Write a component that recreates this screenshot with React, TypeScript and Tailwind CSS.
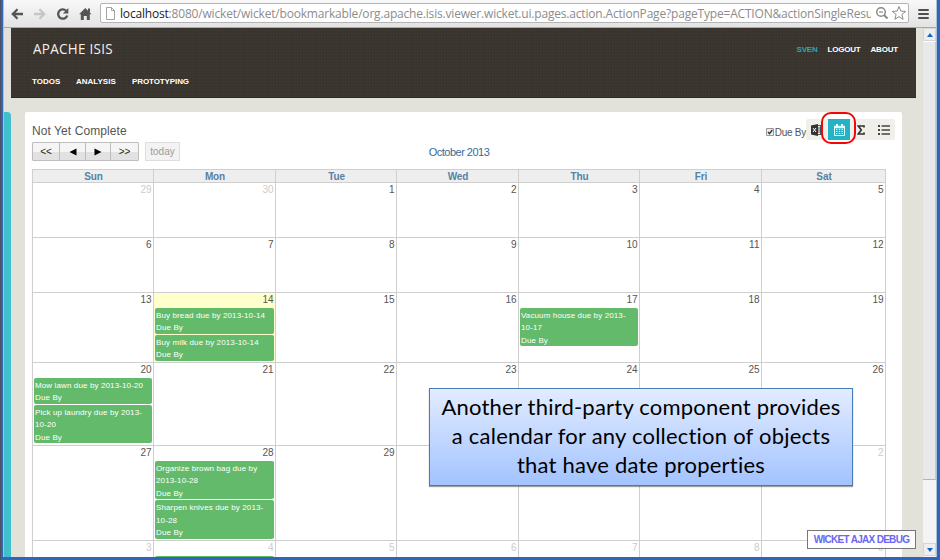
import React from "react";

type Entry = { title: string[] };
type Day = { n: number; muted?: boolean; today?: boolean; entries?: Entry[] };

const weekdays = ["Sun", "Mon", "Tue", "Wed", "Thu", "Fri", "Sat"];

const weeks: { height: string; days: Day[] }[] = [
  {
    height: "h-[55px]",
    days: [{ n: 29, muted: true }, { n: 30, muted: true }, { n: 1 }, { n: 2 }, { n: 3 }, { n: 4 }, { n: 5 }],
  },
  { height: "h-[55px]", days: [{ n: 6 }, { n: 7 }, { n: 8 }, { n: 9 }, { n: 10 }, { n: 11 }, { n: 12 }] },
  {
    height: "h-[70px]",
    days: [
      { n: 13 },
      {
        n: 14,
        today: true,
        entries: [{ title: ["Buy bread due by 2013-10-14"] }, { title: ["Buy milk due by 2013-10-14"] }],
      },
      { n: 15 },
      { n: 16 },
      { n: 17, entries: [{ title: ["Vacuum house due by 2013-", "10-17"] }] },
      { n: 18 },
      { n: 19 },
    ],
  },
  {
    height: "h-[83px]",
    days: [
      {
        n: 20,
        entries: [{ title: ["Mow lawn due by 2013-10-20"] }, { title: ["Pick up laundry due by 2013-", "10-20"] }],
      },
      { n: 21 },
      { n: 22 },
      { n: 23 },
      { n: 24 },
      { n: 25 },
      { n: 26 },
    ],
  },
  {
    height: "h-[95px]",
    days: [
      { n: 27 },
      {
        n: 28,
        entries: [
          { title: ["Organize brown bag due by", "2013-10-28"] },
          { title: ["Sharpen knives due by 2013-", "10-28"] },
        ],
      },
      { n: 29 },
      { n: 30 },
      { n: 31 },
      { n: 1, muted: true },
      { n: 2, muted: true },
    ],
  },
  {
    height: "h-[55px]",
    days: [
      { n: 3, muted: true },
      { n: 4, muted: true, entries: [{ title: [] }] },
      { n: 5, muted: true },
      { n: 6, muted: true },
      { n: 7, muted: true },
      { n: 8, muted: true },
      { n: 9, muted: true },
    ],
  },
];

const columns = "grid grid-cols-[121px_122px_121px_122px_121px_122px_124px]";

function Toolbar() {
  return (
    <div className="flex h-[28px] shrink-0 items-center border-b border-[#a9a9a9] bg-gradient-to-b from-[#f8f8f8] to-[#e3e3e3] pl-[6px]">
      <svg className="h-[14px] w-[90px] shrink-0" viewBox="0 0 90 14" fill="none">
        <path d="M13 7H2.500M7.500 2.300L2.800 7l4.700 4.700" stroke="#555" strokeWidth="2.300" />
        <path d="M24 7h10M29.500 2.300L34.200 7l-4.700 4.700" stroke="#c6c6c6" strokeWidth="2.300" />
        <path d="M56 3.500A4.700 4.700 0 1 0 57.300 8.500" stroke="#555" strokeWidth="2.300" />
        <path d="M58.300 1v5.500h-5.500z" fill="#555" />
        <path d="M75.300 1l6.200 6.200h-1.700V13h-3v-4h-3v4h-3V7.200h-1.700z" fill="#555" />
        <path d="M78 1.500h2v4h-2z" fill="#555" />
      </svg>
      <div className="mt-[-1px] flex h-[20px] w-[809px] shrink-0 items-center rounded-[2px] border border-[#b4b4b4] bg-white pl-[5px]">
        <svg className="mr-[5px] h-[13px] w-[9px] shrink-0" viewBox="0 0 9 13" fill="#fff" stroke="#a3a3a3">
          <path d="M.500.500h5l3 3v9h-8zM5.500.500v3h3" />
        </svg>
        <div className="mt-px w-[751px] overflow-hidden whitespace-nowrap font-['Open_Sans',sans-serif] text-[12px] leading-[18px] tracking-[-0.185px] text-[#8c8c8c]">
          <span className="text-[#222]">localhost</span>
          :8080/wicket/wicket/bookmarkable/org.apache.isis.viewer.wicket.ui.pages.action.ActionPage?pageType=ACTION&amp;actionSingleResu
        </div>
        <svg className="ml-[4px] h-[14px] w-[32px] shrink-0" viewBox="0 0 32 14" fill="none" stroke="#8a8a8a">
          <circle cx="6" cy="6" r="4.300" strokeWidth="1.500" />
          <path d="M4 6h4" strokeWidth="1.200" />
          <path d="M9 9l3.500 3.500" strokeWidth="2" />
          <path d="M24 .5l1.800 4.600 4.900.3-3.800 3.100 1.200 4.800L24 10.600l-4.100 2.700 1.200-4.800-3.800-3.100 4.900-.3z" />
        </svg>
      </div>
      <div className="ml-[9px] flex flex-col gap-[2px]">
        <div className="h-[2px] w-[11px] rounded-full bg-[#505050]" />
        <div className="h-[2px] w-[11px] rounded-full bg-[#505050]" />
        <div className="h-[2px] w-[11px] rounded-full bg-[#505050]" />
      </div>
    </div>
  );
}

function Header() {
  return (
    <header className="flex h-[70px] w-[905px] shrink-0 justify-between border-b border-[#2c2822] bg-[#3a352e] bg-[repeating-linear-gradient(90deg,#0000000c_0_1px,transparent_1px_3px),repeating-linear-gradient(0deg,#ffffff04_0_1px,transparent_1px_3px)] pl-[21px] pr-[18px] text-[8px] font-bold text-white">
      <div className="flex flex-col">
        <div className="ml-px mt-[11px] h-[20px] origin-left scale-x-[0.96] whitespace-nowrap font-['Open_Sans',sans-serif] text-[14px] font-normal leading-[20px] tracking-[0.3px] text-[#f3f2ef]">
          APACHE ISIS
        </div>
        <nav className="mt-[18px] flex gap-[16px] leading-[10px]">
          <span className="w-[28px] whitespace-nowrap">TODOS</span>
          <span className="w-[40px] whitespace-nowrap">ANALYSIS</span>
          <span className="whitespace-nowrap tracking-[-0.1px]">PROTOTYPING</span>
        </nav>
      </div>
      <nav className="mt-[17px] flex gap-[10px] leading-[10px] tracking-[-0.2px]">
        <span className="text-[#27a9b5]">SVEN</span>
        <span>LOGOUT</span>
        <span>ABOUT</span>
      </nav>
    </header>
  );
}

function NavButtons() {
  const button = "flex items-center justify-center border-r border-[#bdbdbd] text-[10px] text-[#222]";
  return (
    <div className="flex h-[19px] items-stretch">
      <div className="flex w-[107px] rounded-[1px] border border-[#bdbdbd] bg-[linear-gradient(#f5f5f5_50%,#e2e2e2_50%)]">
        <span className={`${button} w-[27px]`}>&lt;&lt;</span>
        <span className={`${button} w-[26px]`}>
          <svg width="8" height="8" viewBox="0 0 8 8"><path d="M7.500.500v7L.500 4z" fill="#000" /></svg>
        </span>
        <span className={`${button} w-[25px]`}>
          <svg width="8" height="8" viewBox="0 0 8 8"><path d="M.500.500v7L7.500 4z" fill="#000" /></svg>
        </span>
        <span className="flex flex-1 items-center justify-center text-[10px] text-[#222]">&gt;&gt;</span>
      </div>
      <div className="ml-[6px] flex w-[35px] items-center justify-center border border-[#dedede] bg-[#f3f3f3] text-[10px] text-[#9b9b9b]">
        today
      </div>
    </div>
  );
}

function ViewSwitcher() {
  return (
    <div className="flex items-center">
      <span className="mt-[5px] flex items-center whitespace-nowrap text-[10px] tracking-[-0.25px] text-[#555]">
        <svg className="mr-px h-[8px] w-[8px]" viewBox="0 0 8 8">
          <path d="M.500.500h7v7h-7z" fill="#eee" stroke="#999" />
          <path d="M2 4l1.500 1.700L6.300 2" fill="none" stroke="#333" strokeWidth="1.400" />
        </svg>
        Due By
      </span>
      <div className="relative flex h-[21px] w-[89px] items-center rounded-[2px] bg-[#f0efe9]">
        <svg className="ml-[5px] h-[12px] w-[12px]" viewBox="0 0 12 12">
          <path d="M0 1.500L7 0v12L0 10.500z" fill="#333" />
          <path d="M2 4l3 4M5 4L2 8" stroke="#fff" />
          <path d="M7 1.500h4.500v9H7M7 4h4.500M7 6h4.500M7 8h4.500M9.500 1.500v9" fill="none" stroke="#333" strokeWidth=".8" />
        </svg>
        <div className="ml-[5px] flex h-[21px] w-[22px] items-center justify-center bg-[#24b3c2]">
          <svg className="h-[12px] w-[11px]" viewBox="0 0 11 12">
            <path d="M0 1.800h11v2.400H0zM2 0h2v3H2zM7 0h2v3H7z" fill="#e6f8fa" />
            <path d="M.500 4v7.500h10V4" fill="none" stroke="#e6f8fa" />
            <path d="M2 5.500h7M2 7.500h7M2 9.500h7" stroke="#e6f8fa" strokeDasharray="1.400 1.400" />
          </svg>
        </div>
        <svg className="ml-[7px] h-[10px] w-[8px]" viewBox="0 0 8 10" fill="none">
          <path d="M7 2.500V1H1.300L4.300 5 1.300 9H7V7.500" stroke="#333" strokeWidth="1.700" />
        </svg>
        <svg className="ml-[13px] h-[10px] w-[12px]" viewBox="0 0 12 10">
          <path d="M0 0h2v2H0zM0 4h2v2H0zM0 8h2v2H0zM3.500.300H12v1.500H3.500zM3.500 4.300H12v1.500H3.500zM3.500 8.300H12v1.500H3.500z" fill="#444" />
        </svg>
        <div className="absolute left-[15px] top-[-7px] h-[32px] w-[35px] rounded-[10px] border-2 border-[#f00808]" />
      </div>
    </div>
  );
}

function Event({ entry }: { entry: Entry }) {
  return (
    <div className="mb-px rounded-[2px] bg-[#63ba6b] pl-px pt-px text-[8px] leading-[13.500px] tracking-[0.12px] text-white">
      {entry.title.map((line) => (
        <div key={line} className="h-[12.500px] whitespace-nowrap">{line}</div>
      ))}
      <div className="h-[12.500px]">{entry.title.length > 0 && "Due By"}</div>
    </div>
  );
}

function Calendar() {
  return (
    <div className="w-[854px] border-r border-[#cfcfcf]">
      <div className={`${columns} h-[13px] border-t border-[#cfcfcf] bg-[#eeeeee]`}>
        {weekdays.map((d) => (
          <div key={d} className="border-l border-[#cfcfcf] pl-px text-center text-[10px] font-bold leading-[13px] tracking-[-0.1px] text-[#5781a5]">
            {d}
          </div>
        ))}
      </div>
      {weeks.map((week, i) => (
        <div key={i} className={`${columns} ${week.height}`}>
          {week.days.map((day) => (
            <div
              key={day.n}
              className={`border-l border-t border-[#cfcfcf] pl-px pr-px ${day.today ? "bg-[#ffffcc]" : ""}`}
            >
              <div className={`h-[14.500px] pr-[0.5px] text-right text-[10px] leading-[13px] ${day.muted ? "text-[#cccccc]" : "text-[#555555]"}`}>
                {day.n}
              </div>
              {day.entries?.map((entry, k) => <Event key={k} entry={entry} />)}
            </div>
          ))}
        </div>
      ))}
    </div>
  );
}

function Scrollbar() {
  return (
    <div className="flex w-[13px] shrink-0 flex-col bg-[#f4f4f4]">
      <div className="flex h-[13px] items-center justify-center border border-[#d5d5d5] bg-[#eeeeee]">
        <svg width="6" height="4" viewBox="0 0 6 4"><path d="M3 0l3 4H0z" fill="#1268c9" /></svg>
      </div>
      <div className="h-[439px] border-b border-r border-t border-b-[#b5b5b5] border-r-[#c9c9c9] border-t-white bg-[#e9e9e9]" />
      <div className="flex-1" />
      <div className="mb-px flex h-[13px] items-center justify-center border border-[#d5d5d5] bg-[#eeeeee]">
        <svg width="6" height="4" viewBox="0 0 6 4"><path d="M3 4l3-4H0z" fill="#1268c9" /></svg>
      </div>
    </div>
  );
}

export default function App() {
  return (
    <div className="h-[560px] w-[940px] border-l border-[#4b4f66]">
      <div className="relative flex h-[560px] w-[939px] flex-col overflow-hidden border-b-[3px] border-l-[2px] border-r-[3px] border-[#3464b4] bg-[#e2e2da] font-['Liberation_Sans',Arial,sans-serif]">
        <div className="flex min-h-0 flex-1 flex-col border-l border-r border-[#a9c0e0]">
          <Toolbar />
          <div className="flex min-h-0 flex-1">
            <div className="flex min-w-0 flex-1 flex-col">
              <div className="flex justify-start pl-[7px]">
                <Header />
              </div>
              <div className="mt-[14px] flex min-h-0 flex-1">
                <div className="w-[7px] shrink-0 rounded-tr-[4px] bg-[#3fc0cc]" />
                <main className="ml-[14px] w-[877px] overflow-hidden rounded-t-[2px] bg-white pl-[7px]">
                  <div className="flex h-[57px] justify-between pr-[7px]">
                    <div className="w-[240px] pt-[12px]">
                      <h1 className="mb-[3px] h-[15px] whitespace-nowrap text-[12px] leading-[15px] tracking-[0.08px] text-[#555]">Not Yet Complete</h1>
                      <NavButtons />
                    </div>
                    <div className="pr-[9px] pt-[34px] text-[11px] leading-[13px] tracking-[-0.5px] text-[#386b9b]">October 2013</div>
                    <div className="flex w-[240px] items-start justify-end pt-[7px]">
                      <ViewSwitcher />
                    </div>
                  </div>
                  <Calendar />
                </main>
              </div>
            </div>
            <Scrollbar />
          </div>
        </div>

        <div className="absolute left-[426px] top-[388px] h-[98px] w-[424px] border border-[#457bb9] bg-gradient-to-b from-[#e2ecff] to-[#a3c3ff] pt-[3px] text-center font-['Lato',sans-serif] text-[22px] leading-[29px] tracking-[0.22px] text-black shadow-[0px_1px_1px_#00000060] [font-variant-ligatures:none]">
          <div className="whitespace-nowrap">Another third-party component provides</div>
          <div className="whitespace-nowrap">a calendar for any collection of objects</div>
          <div className="whitespace-nowrap">that have date properties</div>
        </div>

        <div className="absolute left-[804px] top-[530px] flex h-[19px] w-[109px] items-center justify-center whitespace-nowrap border border-[#777] bg-white/85 text-[10px] font-bold tracking-[-0.7px] text-[#6a66f5]">
          WICKET AJAX DEBUG
        </div>
      </div>
    </div>
  );
}
